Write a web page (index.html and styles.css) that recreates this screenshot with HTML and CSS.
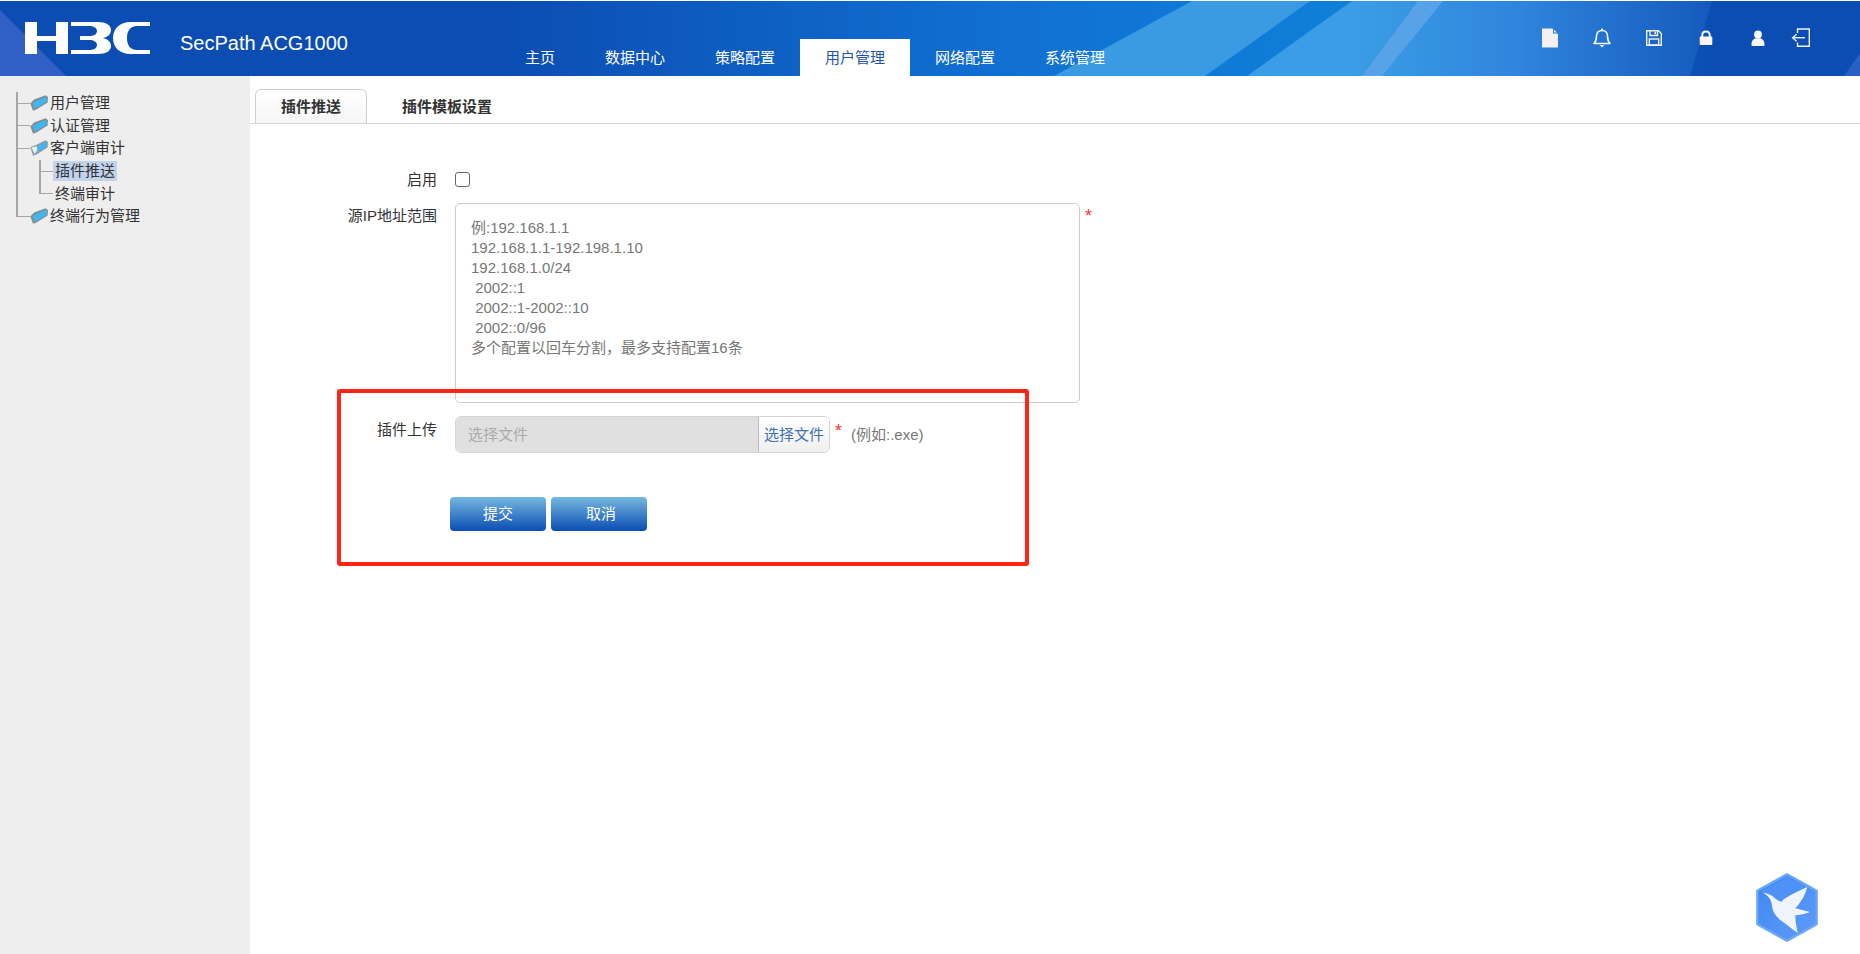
FILE: index.html
```html
<!DOCTYPE html>
<html lang="zh-CN">
<head>
<meta charset="utf-8">
<title>SecPath ACG1000</title>
<link rel="stylesheet" href="styles.css">
</head>
<body>
<header class="header">
  <svg class="header-bg" viewBox="0 0 1860 75" preserveAspectRatio="none" aria-hidden="true">
    <defs>
      <linearGradient id="hb" x1="0" x2="1" y1="0" y2="0">
        <stop offset="0" stop-color="#0b4db3"/>
        <stop offset="0.27" stop-color="#0b4db3"/>
        <stop offset="0.55" stop-color="#1171d3"/>
        <stop offset="0.72" stop-color="#0f7fd9"/>
        <stop offset="0.83" stop-color="#1b6ccd"/>
        <stop offset="0.92" stop-color="#0b4db3"/>
        <stop offset="1" stop-color="#0b4db3"/>
      </linearGradient>
      <linearGradient id="hl" x1="1055" x2="1720" y1="0" y2="0" gradientUnits="userSpaceOnUse">
        <stop offset="0" stop-color="#3a9be3"/>
        <stop offset="0.45" stop-color="#3a9de5"/>
        <stop offset="0.7" stop-color="#2f84dc"/>
        <stop offset="1" stop-color="#1358bb"/>
      </linearGradient>
    </defs>
    <rect width="1860" height="75" fill="url(#hb)"/>
    <polygon points="0,9 66,75 0,75" fill="#3060c6"/>
    <polygon points="1192,0 1310,0 1205,75 1054,75" fill="#3a9be3"/>
    <polygon points="1352,0 1712,0 1690,75 1247,75" fill="url(#hl)"/>
    <polygon points="1418,0 1443,0 1382,75 1362,75" fill="#58a3e8"/>
    <polygon points="1860,52 1860,75 1844,75" fill="#2a5fc4"/>
  </svg>
  <svg class="logo" viewBox="0 0 125 32" aria-label="H3C" role="img">
    <g fill="#fff">
      <rect x="0" y="0" width="12" height="32"/>
      <rect x="31" y="0" width="12" height="32"/>
      <rect x="12" y="14" width="19" height="5"/>
      <path d="M46 0H73C81 0 86 3 86 8C86 12 83 15 78 16C83 17 86 20 86 24C86 29 81 32 73 32H46V28H64C69 28 72 26 72 23C72 20 69 18 64 18H55V14H64C69 14 72 12 72 9C72 6 69 4 64 4H46Z"/>
      <path d="M125 0H106C94 0 88 7 88 16C88 25 94 32 106 32H125V28H112C105 28 102 23 102 16C102 9 105 4 112 4H125Z"/>
    </g>
  </svg>
  <div class="product">SecPath ACG1000</div>
  <nav class="nav">
    <a class="nav-item">主页</a>
    <a class="nav-item">数据中心</a>
    <a class="nav-item">策略配置</a>
    <a class="nav-item active">用户管理</a>
    <a class="nav-item">网络配置</a>
    <a class="nav-item">系统管理</a>
  </nav>
  <div class="tools">
    <svg class="tool" viewBox="0 0 20 20"><path d="M2 0.5H12.5L18 6V19.5H2Z" fill="#f1f1f1"/><path d="M13.2 0.8L17.8 5.4H13.2Z" fill="#1a6ccc"/><path d="M14 1.8L16.8 4.6H14Z" fill="#f1f1f1"/></svg>
    <svg class="tool" viewBox="0 0 20 20"><path d="M2 15.5C4 13.5 4.5 11 4.5 8C4.5 4.5 7 2.5 10 2.5C13 2.5 15.5 4.5 15.5 8C15.5 11 16 13.5 18 15.5Z" fill="none" stroke="#f6f6f6" stroke-width="1.6" stroke-linejoin="round"/><circle cx="10" cy="1.6" r="1.1" fill="#f6f6f6"/><path d="M7.5 17H12.5L10 19.5Z" fill="#f6f6f6"/></svg>
    <svg class="tool" viewBox="0 0 20 20"><path d="M2.7 2.7H14.5L17.3 5.5V17.3H2.7Z" fill="none" stroke="#f1f1f1" stroke-width="1.4"/><path d="M6 3V7.5H13.5V3" fill="none" stroke="#f1f1f1" stroke-width="1.4"/><rect x="10.5" y="3.6" width="1.6" height="2.6" fill="#f1f1f1"/><rect x="5.3" y="11" width="9.4" height="6" fill="none" stroke="#f1f1f1" stroke-width="1.4"/></svg>
    <svg class="tool" viewBox="0 0 20 20"><path d="M6.3 9V7.2C6.3 4.8 7.8 3.4 10 3.4C12.2 3.4 13.7 4.8 13.7 7.2V9" fill="none" stroke="#f8f8f8" stroke-width="2"/><rect x="3.7" y="8.6" width="12.6" height="8.4" rx="0.8" fill="#f8f8f8"/></svg>
    <svg class="tool" viewBox="0 0 20 20"><circle cx="10" cy="6.5" r="3.9" fill="#f8f8f8"/><path d="M3.5 17C3.3 13 5 11 8 10.2H12C15 11 16.7 13 16.5 17C16.5 17.6 16 18 15.4 18H4.6C4 18 3.5 17.6 3.5 17Z" fill="#f8f8f8"/></svg>
    <svg class="tool tool-exit" viewBox="0 0 20 20"><path d="M6.5 5V1H18.3V18.3H6.5V14.5" fill="none" stroke="#f1f1f1" stroke-width="1.4"/><path d="M14 9.7H3" fill="none" stroke="#f1f1f1" stroke-width="1.4"/><path d="M5.6 6.2L1.6 9.7L5.6 13.2" fill="none" stroke="#f1f1f1" stroke-width="1.4"/></svg>
  </div>
</header>

<div class="body">
  <aside class="sidebar">
    <ul class="tree">
      <li class="tree-row">
        <span class="conn"></span>
        <svg class="folder" viewBox="0 0 18 16"><path d="M0.3 8.5L4 4.5L15.5 0.2L18 2L17.6 7.5L6.5 14.6L3 15.8Z" fill="#7f8f98"/><path d="M2.6 8L16.2 1.6L16.9 6.6L4.8 13.8Z" fill="#3fb5f2"/></svg>
        <span class="tree-label">用户管理</span>
      </li>
      <li class="tree-row">
        <span class="conn"></span>
        <svg class="folder" viewBox="0 0 18 16"><path d="M0.3 8.5L4 4.5L15.5 0.2L18 2L17.6 7.5L6.5 14.6L3 15.8Z" fill="#7f8f98"/><path d="M2.6 8L16.2 1.6L16.9 6.6L4.8 13.8Z" fill="#3fb5f2"/></svg>
        <span class="tree-label">认证管理</span>
      </li>
      <li class="tree-row">
        <span class="conn"></span>
        <svg class="folder" viewBox="0 0 18 16"><path d="M0.3 7L6 5L15.5 0.2L18 2L17.6 7.5L6.5 14.6L3 15.8Z" fill="#8d9da5"/><path d="M1.4 7.6L6.6 6.2L8.2 9L4.6 14Z" fill="#e9eef0"/><path d="M7 6.5L16.2 1.6L16.9 6.6L7.5 11.8Z" fill="#3fb5f2"/></svg>
        <span class="tree-label">客户端审计</span>
      </li>
      <li class="tree-row">
        <span class="conn-pass"></span>
        <span class="conn"></span>
        <span class="tree-label sub selected">插件推送</span>
      </li>
      <li class="tree-row">
        <span class="conn-pass"></span>
        <span class="conn conn-last"></span>
        <span class="tree-label sub">终端审计</span>
      </li>
      <li class="tree-row">
        <span class="conn conn-last"></span>
        <svg class="folder" viewBox="0 0 18 16"><path d="M0.3 8.5L4 4.5L15.5 0.2L18 2L17.6 7.5L6.5 14.6L3 15.8Z" fill="#7f8f98"/><path d="M2.6 8L16.2 1.6L16.9 6.6L4.8 13.8Z" fill="#3fb5f2"/></svg>
        <span class="tree-label">终端行为管理</span>
      </li>
    </ul>
  </aside>

  <main class="content">
    <div class="tabs">
      <a class="tab active">插件推送</a>
      <a class="tab">插件模板设置</a>
    </div>
    <form class="form">
      <div class="row row-enable">
        <label class="label">启用</label>
        <input class="check" type="checkbox">
      </div>
      <div class="row row-range">
        <label class="label label-range">源IP地址范围</label>
        <div class="area">例:192.168.1.1
192.168.1.1-192.198.1.10
192.168.1.0/24
 2002::1
 2002::1-2002::10
 2002::0/96
多个配置以回车分割，最多支持配置16条</div>
        <span class="star star-area">*</span>
      </div>
      <div class="row row-file">
        <label class="label label-file">插件上传</label>
        <div class="file">
          <span class="file-name">选择文件</span>
          <span class="file-btn">选择文件</span>
        </div>
        <span class="star star-file">*</span>
        <span class="hint">(例如:.exe)</span>
      </div>
      <div class="actions">
        <button class="btn" type="button">提交</button>
        <button class="btn btn-cancel" type="button">取消</button>
      </div>
    </form>
  </main>
</div>

<div class="annotation"></div>

<svg class="bird" viewBox="0 0 186 207" aria-hidden="true">
  <defs>
    <linearGradient id="bg1" x1="0" x2="1" y1="0" y2="1">
      <stop offset="0" stop-color="#3f86f2"/>
      <stop offset="1" stop-color="#5f9cf8"/>
    </linearGradient>
  </defs>
  <path d="M93 4L182 53V154L93 203L4 154V53Z" fill="url(#bg1)" stroke="#6ba6fb" stroke-width="7" stroke-linejoin="round"/>
  <path d="M93 12L174 57L93 104L12 57Z" fill="#4f92f5"/>
  <path d="M22 59C34 61 44 65 50 70C60 78 68 86 76 86C86 74 122 56 154 42C148 62 140 82 118 106L162 117C148 122 132 126 118 127C118 146 122 164 125 180C112 170 96 158 80 146C62 134 50 118 48 100C47 88 44 72 22 59Z" fill="#eef3fc"/>
</svg>
</body>
</html>
```

FILE: styles.css
```css
* { box-sizing: border-box; }

html, body {
  margin: 0;
  padding: 0;
  height: 100%;
  overflow: hidden;
  background: #fff;
  color: #333;
  font: 15px/20px "Liberation Sans", "Noto Sans CJK SC", sans-serif;
}

.header {
  position: relative;
  display: flex;
  align-items: flex-start;
  height: 75px;
  margin-top: 1px;
  color: #fff;
}

.header-bg {
  position: absolute;
  inset: 0;
  width: 100%;
  height: 100%;
}

.logo {
  position: relative;
  flex: none;
  width: 125px;
  height: 32px;
  margin: 21px 0 0 25px;
}

.product {
  position: relative;
  flex: none;
  width: 320px;
  margin: 30px 0 0 30px;
  font-size: 20px;
  line-height: 24px;
}

.nav {
  position: relative;
  display: flex;
  align-self: flex-end;
  height: 37px;
}

.nav-item {
  padding: 0 25px;
  line-height: 37px;
  color: #fff;
}

.nav-item.active {
  background: #fff;
  color: #1f56ad;
}

.tools {
  position: relative;
  display: flex;
  align-items: center;
  margin: 27px 49px 0 auto;
  gap: 32px;
}

.tool {
  display: block;
  width: 20px;
  height: 20px;
}

.tool-exit { margin-left: -9px; }

.body {
  display: flex;
  height: 878px;
}

.sidebar {
  flex: none;
  width: 250px;
  padding: 16px 0 0 16px;
  background: #eee;
}

.tree {
  margin: 0;
  padding: 0;
  list-style: none;
}

.tree-row {
  display: flex;
  align-items: center;
  height: 22.6px;
}

.conn {
  flex: none;
  align-self: stretch;
  width: 14px;
  background:
    linear-gradient(#a6a6a6, #a6a6a6) 0 0 / 2px 100% no-repeat,
    linear-gradient(#a6a6a6, #a6a6a6) 0 50% / 100% 1px no-repeat;
}

.conn-last {
  background:
    linear-gradient(#a6a6a6, #a6a6a6) 0 0 / 2px 50% no-repeat,
    linear-gradient(#a6a6a6, #a6a6a6) 0 50% / 100% 1px no-repeat;
}

.conn-pass {
  flex: none;
  align-self: stretch;
  width: 23px;
  background: linear-gradient(#a6a6a6, #a6a6a6) 0 0 / 2px 100% no-repeat;
}

.folder {
  flex: none;
  width: 18px;
  height: 16px;
}

.tree-label {
  margin-left: 2px;
  white-space: nowrap;
}

.tree-label.sub {
  margin-left: 0;
  padding: 0 2px;
}

.selected { background: #c2d3ec; }

.content {
  flex: 1;
  min-width: 0;
}

.tabs {
  display: flex;
  height: 48px;
  padding: 13px 0 0 5px;
  border-bottom: 1px solid #d6d6d6;
}

.tab {
  height: 34px;
  padding: 0 25px;
  margin-right: 9px;
  border: 1px solid transparent;
  border-bottom: 0;
  border-radius: 6px 6px 0 0;
  font-weight: bold;
  line-height: 33px;
  color: #333;
}

.tab.active {
  border-color: #d0d0d0;
  background: linear-gradient(#fff, #f6f6f6);
}

.form {
  padding-top: 48px;
}

.row {
  display: flex;
  align-items: flex-start;
}

.label {
  flex: none;
  width: 187px;
  margin-right: 18px;
  text-align: right;
}

.row-enable { height: 15px; }
.row-enable .label { line-height: 16px; }

.check {
  appearance: none;
  display: block;
  width: 15px;
  height: 15px;
  margin: 0;
  border: 1px solid #666;
  border-radius: 3px;
  background: #fff;
}

.row-range { margin-top: 16px; }

.label-range { padding-top: 3px; }
.label-file { padding-top: 4px; }

.area {
  flex: none;
  width: 625px;
  height: 200px;
  padding: 14px 15px;
  border: 1px solid #ccc;
  border-radius: 5px;
  color: #777;
  white-space: pre;
}

.star {
  flex: none;
  color: #f33;
  font-size: 18px;
  line-height: 18px;
}

.star-area { margin: 4px 0 0 5px; }

.row-file { margin-top: 13px; }

.file {
  flex: none;
  display: flex;
  width: 375px;
  height: 37px;
  border: 1px solid #d4d4d4;
  border-radius: 6px;
  overflow: hidden;
}

.file-name {
  flex: 1;
  padding: 8px 0 0 12px;
  background: #e0e0e0;
  color: #aaa;
}

.file-btn {
  flex: none;
  width: 71px;
  padding-top: 8px;
  border-left: 1px solid #bbb;
  background: linear-gradient(#fff, #efefef);
  color: #3d72b4;
  text-align: center;
}

.star-file { margin: 6px 0 0 5px; }

.hint {
  flex: none;
  margin: 9px 0 0 9px;
  color: #777;
}

.actions {
  display: flex;
  gap: 5px;
  margin: 44px 0 0 200px;
}

.btn {
  width: 96px;
  height: 34px;
  padding: 0;
  border: 0;
  border-radius: 4px;
  background: linear-gradient(#76b8e0, #0b4db3);
  color: #fff;
  font: inherit;
}

.btn-cancel { padding-left: 4px; }

.annotation {
  position: absolute;
  left: 337px;
  top: 389px;
  width: 692px;
  height: 177px;
  border: 4px solid #ff2416;
  border-radius: 3px;
  pointer-events: none;
}

.bird {
  position: absolute;
  right: 42px;
  bottom: 12px;
  width: 62px;
  height: 69px;
}
```
